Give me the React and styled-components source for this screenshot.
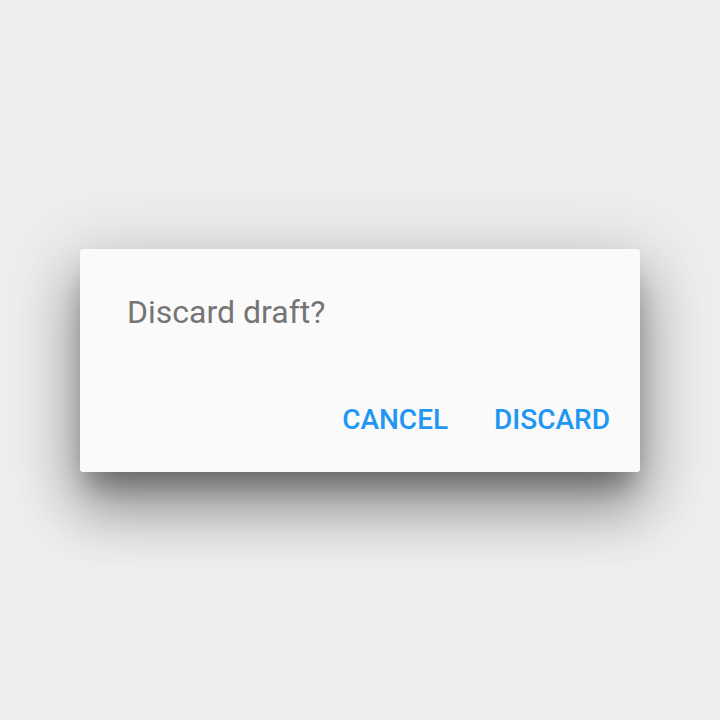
import React from "react";
import styled, { createGlobalStyle } from "styled-components";

const GlobalStyle = createGlobalStyle`
  html, body {
    margin: 0;
    padding: 0;
    background: #eeeeee;
    font-family: Roboto, "Liberation Sans", sans-serif;
  }
`;

const Page = styled.div`
  width: 720px;
  height: 720px;
  display: flex;
  align-items: center;
  justify-content: center;
  background: #eeeeee;
`;

const Dialog = styled.div`
  width: 560px;
  box-sizing: border-box;
  background: #fafafa;
  border-radius: 3px;
  display: flex;
  flex-direction: column;
  box-shadow: 0 38px 56px 2px rgba(0, 0, 0, 0.3),
    0 14px 74px 12px rgba(0, 0, 0, 0.14),
    0 20px 26px -8px rgba(0, 0, 0, 0.32);
`;

const Title = styled.h2`
  margin: 0;
  padding: 44px 44px 0 47px;
  font-size: 32px;
  font-weight: 400;
  line-height: normal;
  color: #757575;
`;

const Actions = styled.div`
  display: flex;
  justify-content: flex-end;
  gap: 14px;
  margin-top: 65px;
  padding: 0 14px 28px;
`;

const Button = styled.button`
  border: none;
  background: transparent;
  padding: 8px 16px;
  font-family: Roboto, "Liberation Sans", sans-serif;
  font-size: 28px;
  font-weight: 500;
  line-height: 32px;
  color: #2196f3;
  text-transform: uppercase;
  cursor: pointer;
`;

export default function App() {
  return (
    <>
      <GlobalStyle />
      <Page>
        <Dialog>
          <Title>Discard draft?</Title>
          <Actions>
            <Button>Cancel</Button>
            <Button>Discard</Button>
          </Actions>
        </Dialog>
      </Page>
    </>
  );
}
